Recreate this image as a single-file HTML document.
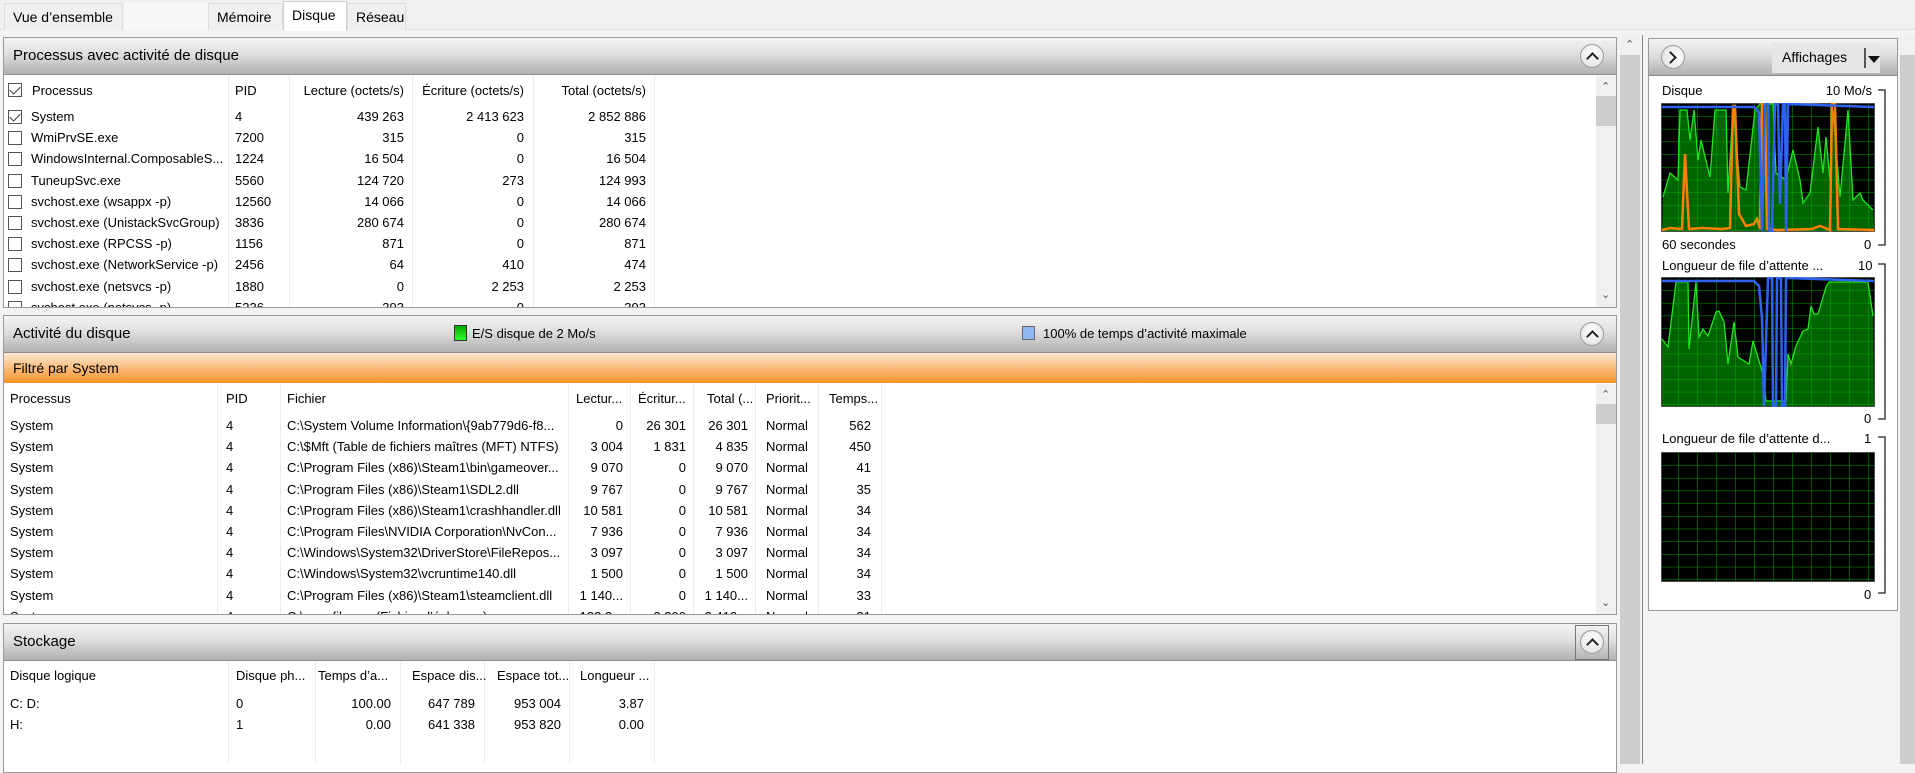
<!DOCTYPE html>
<html><head><meta charset="utf-8"><style>
*{box-sizing:border-box;margin:0;padding:0}
body{width:1915px;height:764px;overflow:hidden;background:#f3f3f3;font-family:"Liberation Sans",sans-serif;font-size:13px;color:#000;position:relative}
.a{position:absolute;white-space:nowrap}
.tabbar{left:0;top:0;width:1915px;height:30px;background:#f0f0f0;border-bottom:1px solid #e0e0e0}
.tab{top:3px;height:27px;font-size:14px;line-height:26px;padding:0 8px;background:#f0f0f0;border:1px solid #dcdcdc;border-bottom:none}
.panel{background:#fff;border:1px solid #9a9a9a}
.hdr{left:0;right:0;top:0;height:37px;background:linear-gradient(#f4f4f4,#dedede 45%,#b0b0b0);border-bottom:1px solid #8c8c8c;font-size:15px;line-height:36px;padding-left:9px}
.cbtn{width:24px;height:24px;border-radius:50%;border:1px solid #9a9a9a;background:radial-gradient(circle at 50% 35%,#fff,#ddd);}
.cbtn:after{content:"";position:absolute;left:7px;top:9px;width:7px;height:7px;border-left:2.5px solid #222;border-top:2.5px solid #222;transform:rotate(45deg)}
.sb{background:#f0f0f0}
.thumb{background:#cdcdcd}
.col{border-left:1px solid #ececec}
.r{text-align:right}
.cb{width:14px;height:14px;border:1px solid #555;background:#fff}
.ck:after{content:"";position:absolute;left:3px;top:0px;width:5px;height:9px;border-right:1.5px solid #333;border-bottom:1.5px solid #333;transform:rotate(45deg)}
.arr{font-size:11px;color:#555}
</style></head><body>
<div class="a tabbar"></div>
<div class="a tab" style="left:4px;width:119px">Vue d’ensemble</div>
<div class="a" style="left:124px;top:3px;width:84px;height:27px;background:#f7f7f7"></div>
<div class="a tab" style="left:208px;width:75px">Mémoire</div>
<div class="a tab" style="left:283px;top:1px;height:30px;width:64px;background:#fff;border-color:#d0d0d0">Disque</div>
<div class="a tab" style="left:347px;width:59px">Réseau</div>

<div class="a panel" style="left:3px;top:37px;width:1614px;height:271px">
 <div class="a hdr">Processus avec activité de disque</div>
 <div class="a cbtn" style="left:1576px;top:6px"></div>
 <div class="a sb" style="left:1592px;top:38px;width:20px;height:231px"></div>
 <div class="a arr" style="left:1597px;top:42px">⌃</div>
 <div class="a thumb" style="left:1592px;top:58px;width:20px;height:30px"></div>
 <div class="a arr" style="left:1597px;top:250px">⌄</div>
</div>
<div class="a col" style="left:228px;top:75px;height:232px"></div>
<div class="a col" style="left:289px;top:75px;height:232px"></div>
<div class="a col" style="left:412px;top:75px;height:232px"></div>
<div class="a col" style="left:533px;top:75px;height:232px"></div>
<div class="a col" style="left:654px;top:75px;height:232px"></div>
<div style="position:absolute;left:0;top:0;width:1590px;height:307px;overflow:hidden">
<div class="a cb ck" style="left:8px;top:83px"></div>
<div class="a" style="left:32px;top:83px">Processus</div><div class="a" style="left:235px;top:83px">PID</div>
<div class="a r" style="left:290px;width:114px;top:83px">Lecture (octets/s)</div>
<div class="a r" style="left:413px;width:111px;top:83px">Écriture (octets/s)</div>
<div class="a r" style="left:534px;width:112px;top:83px">Total (octets/s)</div>
</div>
<div style="position:absolute;left:0;top:0;width:1590px;height:307px;overflow:hidden" id="t1"></div>

<div class="a panel" style="left:3px;top:315px;width:1614px;height:300px">
 <div class="a hdr">Activité du disque</div>
 <div class="a cbtn" style="left:1576px;top:6px"></div>
 <div class="a" style="left:0;right:0;top:37px;height:30px;background:linear-gradient(#fde7d2,#f89228);font-size:14px;line-height:30px;padding-left:9px">Filtré par System</div>
 <div class="a sb" style="left:1592px;top:68px;width:20px;height:230px"></div>
 <div class="a arr" style="left:1597px;top:72px">⌃</div>
 <div class="a thumb" style="left:1592px;top:88px;width:20px;height:20px"></div>
 <div class="a arr" style="left:1597px;top:280px">⌄</div>
</div>
<div class="a" style="left:454px;top:325px;width:13px;height:16px;background:linear-gradient(#0a0,#3f3);border:1px solid #333"></div>
<div class="a" style="left:472px;top:326px">E/S disque de 2 Mo/s</div>
<div class="a" style="left:1022px;top:326px;width:13px;height:14px;background:#8fb8f0;border:1px solid #666"></div>
<div class="a" style="left:1043px;top:326px">100% de temps d’activité maximale</div>
<div class="a col" style="left:217px;top:383px;height:231px"></div>
<div class="a col" style="left:280px;top:383px;height:231px"></div>
<div class="a col" style="left:568px;top:383px;height:231px"></div>
<div class="a col" style="left:630px;top:383px;height:231px"></div>
<div class="a col" style="left:693px;top:383px;height:231px"></div>
<div class="a col" style="left:755px;top:383px;height:231px"></div>
<div class="a col" style="left:818px;top:383px;height:231px"></div>
<div class="a col" style="left:881px;top:383px;height:231px"></div>
<div style="position:absolute;left:0;top:0;width:1590px;height:614px;overflow:hidden" id="t2"></div>

<div class="a panel" style="left:3px;top:623px;width:1614px;height:150px">
 <div class="a hdr">Stockage</div>
 <div class="a cbtn" style="left:1576px;top:6px"></div>
 <div class="a" style="left:1571px;top:1px;width:34px;height:35px;border:1px solid #777"></div>
</div>
<div class="a col" style="left:228px;top:661px;height:103px"></div>
<div class="a col" style="left:315px;top:661px;height:103px"></div>
<div class="a col" style="left:400px;top:661px;height:103px"></div>
<div class="a col" style="left:484px;top:661px;height:103px"></div>
<div class="a col" style="left:569px;top:661px;height:103px"></div>
<div class="a col" style="left:654px;top:661px;height:103px"></div>
<div id="t3"></div>

<div class="a" style="left:1620px;top:35px;width:20px;height:729px;background:#cdcdcd"></div>
<div class="a" style="left:1620px;top:35px;width:20px;height:20px;background:#f0f0f0"></div>
<div class="a arr" style="left:1625px;top:38px">⌃</div>
<div class="a" style="left:1642px;top:35px;width:1px;height:729px;background:#888"></div>

<div class="a panel" style="left:1648px;top:38px;width:250px;height:573px">
 <div class="a hdr" style="height:37px"></div>
 <div class="a cbtn" style="left:12px;top:6px;transform:rotate(90deg)"></div>
 <div class="a" style="left:123px;top:4px;width:108px;height:30px;background:#e6e6e6;font-size:14px;line-height:29px;padding-left:10px">Affichages</div>
 <div class="a" style="left:215px;top:9px;width:2px;height:20px;background:#555"></div>
 <div class="a" style="left:219px;top:17px;width:0;height:0;border-left:6px solid transparent;border-right:6px solid transparent;border-top:7px solid #111"></div>
</div>
<div class="a" style="left:1662px;top:83px">Disque</div>
<div class="a r" style="left:1780px;width:92px;top:83px">10 Mo/s</div>
<div class="a" style="left:1662px;top:237px">60 secondes</div>
<div class="a" style="left:1864px;top:237px">0</div>
<div class="a" style="left:1662px;top:258px">Longueur de file d’attente ...</div>
<div class="a" style="left:1858px;top:258px">10</div>
<div class="a" style="left:1864px;top:411px">0</div>
<div class="a" style="left:1662px;top:431px">Longueur de file d’attente d...</div>
<div class="a" style="left:1864px;top:431px">1</div>
<div class="a" style="left:1864px;top:587px">0</div>
<svg class="a" style="left:1640px;top:80px" width="260" height="530">
 <g fill="none" stroke="#222" stroke-width="1.3">
  <path d="M238 10H245V165H238"/><path d="M238 184H245V339H238"/><path d="M238 357H245V513H238"/>
 </g>
</svg>
<div class="a" style="left:1900px;top:35px;width:15px;height:729px;background:#cdcdcd"></div>
<div class="a" style="left:1900px;top:35px;width:15px;height:20px;background:#f0f0f0"></div>

<svg class="a" style="left:1661px;top:103px" width="214" height="129" viewBox="-1 -1 214 129">
 <defs><pattern id="g" x="16" y="0" width="19" height="12.7" patternUnits="userSpaceOnUse"><path d="M0 0V12.7M0 12.7H19" fill="none" stroke="#00a800" stroke-width="1"/></pattern></defs>
 <rect x="-1" y="-1" width="214" height="129" fill="#000" stroke="#999"/>
 <polygon fill="#006400" points="0,127 1,93 8,69 16,76 18,6 25,6 28,36 32,6 36,56 39,36 48,73 53,6 64,6 66,89 71,3 78,83 84,86 93,6 98,0 111,0 114,69 124,76 131,46 138,76 141,99 148,89 156,23 161,69 164,33 168,76 171,6 178,93 186,6 191,96 198,89 201,96 211,106 212,127"/>
 <rect width="212" height="127" fill="url(#g)"/>
 <polyline fill="none" stroke="#1de61d" stroke-width="1.3" points="1,93 8,69 16,76 18,6 25,6 28,36 32,6 36,56 39,36 48,73 53,6 64,6 66,89 71,3 78,83 84,86 93,6 98,0 111,0 114,69 124,76 131,46 138,76 141,99 148,89 156,23 161,69 164,33 168,76 171,6 178,93 186,6 191,96 198,89 201,96 211,106"/>
 <polyline fill="none" stroke="#ff7f00" stroke-width="2.5" points="0,126 8,124 20,125 23,50 27,125 40,124 60,125 68,124 71,2 73,2 77,110 84,122 92,120 95,115 98,125 100,0 103,0 105,125 115,126 150,125 158,122 168,126 170,0 173,0 176,125 212,126"/>
 <polyline fill="none" stroke="#2f62f0" stroke-width="2.5" points="0,3 92,3 97,8 100,127 103,0 106,0 107,127 110,127 113,0 116,0 118,100 121,0 123,0 124,127 126,0 212,3"/>
</svg>
<svg class="a" style="left:1661px;top:277px" width="214" height="130" viewBox="-1 -1 214 130">
 <rect x="-1" y="-1" width="214" height="130" fill="#000" stroke="#999"/>
 <polygon fill="#006400" points="0,128 0,61 6,69 14,4 26,4 27,71 34,4 37,59 41,51 46,58 54,34 57,33 62,44 66,86 72,44 76,79 87,86 91,63 101,96 104,123 124,123 126,76 129,86 134,68 141,53 146,51 149,28 152,36 156,36 164,9 167,4 206,4 211,38 212,128"/>
 <rect width="212" height="128" fill="url(#g)"/>
 <polyline fill="none" stroke="#1de61d" stroke-width="1.3" points="0,61 6,69 14,4 26,4 27,71 34,4 37,59 41,51 46,58 54,34 57,33 62,44 66,86 72,44 76,79 87,86 91,63 101,96 104,123 124,123 126,76 129,86 134,68 141,53 146,51 149,28 152,36 156,36 164,9 167,4 206,4 211,38"/>
 <polyline fill="none" stroke="#2f62f0" stroke-width="2.5" points="0,3 92,3 97,8 100,40 102,128 106,0 110,0 111,128 114,128 115,0 119,0 120,128 123,128 124,0 127,0 212,3"/>
</svg>
<svg class="a" style="left:1661px;top:452px" width="214" height="130" viewBox="-1 -1 214 130">
 <rect x="-1" y="-1" width="214" height="130" fill="#000" stroke="#999"/>
 <rect width="212" height="128" fill="url(#g)"/>
</svg>

<script>
function row(p,cells){var h='';cells.forEach(function(c){h+='<div class="a'+(c[3]?' r':'')+'" style="left:'+c[0]+'px;top:'+c[1]+'px;'+(c[3]?'width:'+c[3]+'px;':'')+'">'+c[2]+'</div>'});p.insertAdjacentHTML('beforeend',h)}
var t1=document.getElementById('t1');
var d1=[["System","4","439 263","2 413 623","2 852 886",1],["WmiPrvSE.exe","7200","315","0","315"],["WindowsInternal.ComposableS...","1224","16 504","0","16 504"],["TuneupSvc.exe","5560","124 720","273","124 993"],["svchost.exe (wsappx -p)","12560","14 066","0","14 066"],["svchost.exe (UnistackSvcGroup)","3836","280 674","0","280 674"],["svchost.exe (RPCSS -p)","1156","871","0","871"],["svchost.exe (NetworkService -p)","2456","64","410","474"],["svchost.exe (netsvcs -p)","1880","0","2 253","2 253"],["svchost.exe (netsvcs -p)","5236","393","0","393"]];
d1.forEach(function(r,i){var y=109+i*21.2;t1.insertAdjacentHTML('beforeend','<div class="a cb'+(r[5]?' ck':'')+'" style="left:8px;top:'+(y+1)+'px"></div>');row(t1,[[31,y,r[0]],[235,y,r[1]],[290,y,r[2],114],[413,y,r[3],111],[534,y,r[4],112]])});
var t2=document.getElementById('t2');
row(t2,[[10,391,"Processus"],[226,391,"PID"],[287,391,"Fichier"],[576,391,"Lectur..."],[638,391,"Écritur..."],[707,391,"Total (..."],[766,391,"Priorit..."],[829,391,"Temps..."]]);
var d2=[["C:\\System Volume Information\\{9ab779d6-f8...","0","26 301","26 301","562"],["C:\\$Mft (Table de fichiers maîtres (MFT) NTFS)","3 004","1 831","4 835","450"],["C:\\Program Files (x86)\\Steam1\\bin\\gameover...","9 070","0","9 070","41"],["C:\\Program Files (x86)\\Steam1\\SDL2.dll","9 767","0","9 767","35"],["C:\\Program Files (x86)\\Steam1\\crashhandler.dll","10 581","0","10 581","34"],["C:\\Program Files\\NVIDIA Corporation\\NvCon...","7 936","0","7 936","34"],["C:\\Windows\\System32\\DriverStore\\FileRepos...","3 097","0","3 097","34"],["C:\\Windows\\System32\\vcruntime140.dll","1 500","0","1 500","34"],["C:\\Program Files (x86)\\Steam1\\steamclient.dll","1 140...","0","1 140...","33"],["C:\\pagefile.sys (Fichier d’échange)","133 2...","2 390","2 412...","31"]];
d2.forEach(function(r,i){var y=418+i*21.2;row(t2,[[10,y,"System"],[226,y,"4"],[287,y,r[0]],[569,y,r[1],54],[631,y,r[2],55],[694,y,r[3],54],[766,y,"Normal"],[819,y,r[4],52]])});
var t3=document.getElementById('t3');
row(t3,[[10,668,"Disque logique"],[236,668,"Disque ph..."],[318,668,"Temps d’a..."],[412,668,"Espace dis..."],[497,668,"Espace tot..."],[580,668,"Longueur ..."]]);
[["C: D:","0","100.00","647 789","953 004","3.87"],["H:","1","0.00","641 338","953 820","0.00"]].forEach(function(r,i){var y=696+i*21;row(t3,[[10,y,r[0]],[236,y,r[1]],[316,y,r[2],75],[401,y,r[3],74],[485,y,r[4],76],[570,y,r[5],74]])});
</script>
</body></html>
